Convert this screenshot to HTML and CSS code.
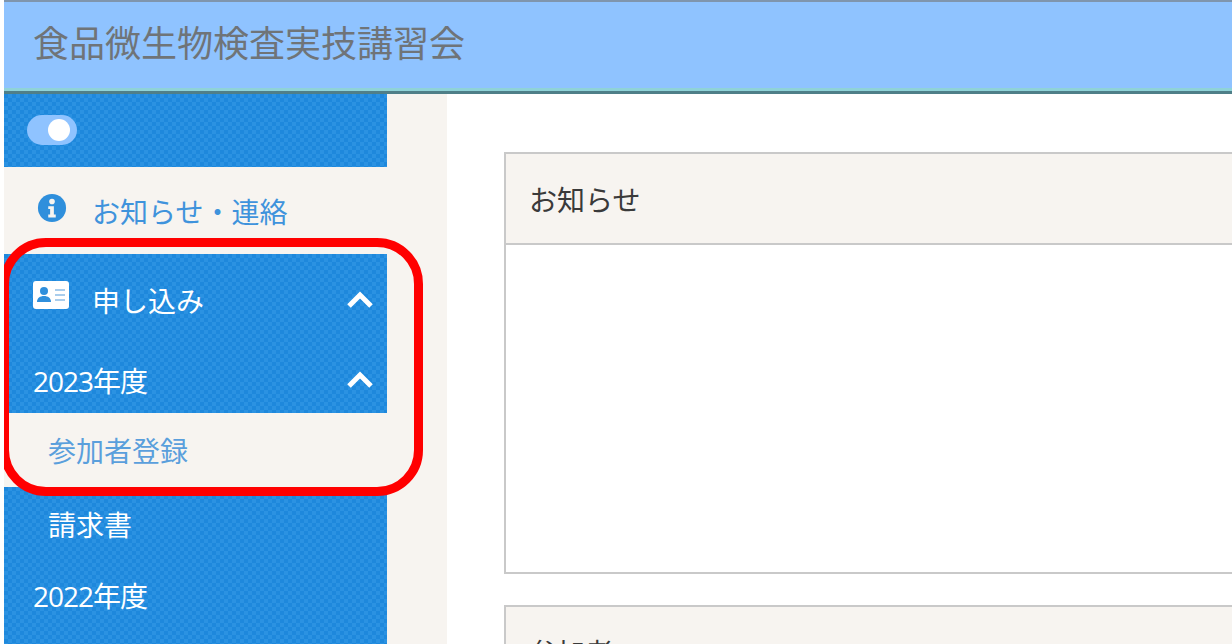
FILE: index.html
```html
<!DOCTYPE html>
<html lang="ja">
<head>
  <meta charset="UTF-8">
  <meta name="viewport" content="width=device-width, initial-scale=1.0">
  <title>食品微生物検査実技講習会</title>
  <link rel="stylesheet" href="styles.css">
</head>
<body>
  <div class="page">
    <header class="topbar">
      <h1>食品微生物検査実技講習会</h1>
    </header>
    <div class="layout">
      <div class="sidebar-wrap">
        <nav class="sidebar">
          <div class="toggle-row">
            <span class="toggle"><span class="knob"></span></span>
          </div>
          <a class="item item-notice">
            <svg class="icon-info" viewBox="0 0 32 32">
              <circle cx="16" cy="16" r="15" fill="#2f8fdc"/>
              <circle cx="16" cy="9" r="3" fill="#f7f4f0"/>
              <path d="M12 14h6v9h2v3h-8v-3h2v-6h-2z" fill="#f7f4f0"/>
            </svg>
            <span>お知らせ・連絡</span>
          </a>
          <div class="group">
            <a class="item item-apply">
              <svg class="icon-card" viewBox="0 0 36 28">
                <rect x="0" y="0" width="36" height="28" rx="3" fill="#fff"/>
                <circle cx="11" cy="10" r="4" fill="#2f8fdc"/>
                <path d="M4 21c0-4 3-6 7-6s7 2 7 6z" fill="#2f8fdc"/>
                <path d="M22 9h10M22 14h10M22 19h10" stroke="#a9cdec" stroke-width="2"/>
              </svg>
              <span class="grow">申し込み</span>
              <svg class="chevron" viewBox="0 0 28 18"><path d="M3 15L14 4l11 11" fill="none" stroke="#fff" stroke-width="5"/></svg>
            </a>
            <a class="item item-year">
              <span class="grow">2023年度</span>
              <svg class="chevron" viewBox="0 0 28 18"><path d="M3 15L14 4l11 11" fill="none" stroke="#fff" stroke-width="5"/></svg>
            </a>
          </div>
          <a class="item item-sub current">参加者登録</a>
          <div class="group group-rest">
            <a class="item item-sub">請求書</a>
            <a class="item item-year">
              <span class="grow">2022年度</span>
            </a>
          </div>
        </nav>
        <div class="highlight"></div>
      </div>
      <main class="content">
        <section class="panel">
          <h2 class="panel-head">お知らせ</h2>
          <div class="panel-body"></div>
        </section>
        <section class="panel">
          <h2 class="panel-head">参加者</h2>
        </section>
      </main>
    </div>
  </div>
</body>
</html>
```

FILE: styles.css
```css
html, body {
  margin: 0;
  padding: 0;
  height: 644px;
  overflow: hidden;
  background-color: #fff;
  font-family: "Open Sans", "Noto Sans CJK JP", sans-serif;
}
a {
  display: flex;
  align-items: center;
}
.page {
  margin-left: 4px;
  height: 644px;
  overflow: hidden;
}
.topbar {
  height: 86px;
  padding-left: 29px;
  display: flex;
  align-items: center;
  background-color: #8fc3ff;
  border-top: 2px solid #7f95ad;
  border-bottom: 3px solid #8fd3d8;
  box-shadow: 0 3px 0 #4f7f88;
  box-sizing: content-box;
}
.topbar h1 {
  margin: 0 0 3px;
  font-size: 36px;
  font-weight: 400;
  color: #6f7478;
  line-height: 1;
}
.layout {
  display: flex;
  margin-top: 3px;
}
.sidebar-wrap {
  position: relative;
  width: 443px;
  height: 550px;
  background-color: #f7f4f0;
  flex-shrink: 0;
}
.sidebar {
  width: 383px;
}
.toggle-row,
.group {
  background-color: #1e88dc;
  background-image: conic-gradient(#2b92e2 25%, transparent 0 50%, #2b92e2 0 75%, transparent 0);
  background-size: 8px 8px;
}
.toggle-row {
  height: 73px;
  display: flex;
  align-items: center;
  padding-left: 23px;
}
.toggle {
  width: 50px;
  height: 30px;
  border-radius: 15px;
  background-color: #8fc3ff;
  position: relative;
  margin-top: -1px;
}
.knob {
  position: absolute;
  left: 21px;
  top: 4px;
  width: 22px;
  height: 22px;
  border-radius: 50%;
  background-color: #fff;
}
.item {
  font-size: 28px;
  color: #fff;
  padding-left: 29px;
  padding-right: 13px;
}
.grow {
  flex: 1;
}
.item-notice {
  height: 87px;
  color: #3f93dc;
  padding-left: 33px;
}
.icon-info {
  width: 30px;
  height: 30px;
  margin-right: 25px;
  margin-top: -6px;
}
.item-apply {
  height: 92px;
  padding-top: 0;
}
.icon-card {
  width: 36px;
  height: 28px;
  margin-right: 23px;
  margin-top: -10px;
}
.item-year {
  height: 67px;
  letter-spacing: -1px;
}
.chevron {
  width: 28px;
  height: 18px;
}
.item-sub {
  height: 74px;
  padding-left: 44px;
}
.current {
  color: #5a9fdc;
}
.group-rest {
  height: 157px;
}
.highlight {
  position: absolute;
  left: -4px;
  top: 144px;
  width: 405px;
  height: 240px;
  border: 9px solid #ff0000;
  border-radius: 46px;
  pointer-events: none;
}
.content {
  flex: 1;
  padding: 58px 0 0 57px;
  background-color: #fff;
  min-width: 0;
}
.panel {
  width: 800px;
  border: 2px solid #c9c9c9;
  border-right: none;
  margin-bottom: 31px;
}
.panel-head {
  margin: 0;
  height: 89px;
  display: flex;
  align-items: center;
  padding-left: 23px;
  font-size: 28px;
  font-weight: 400;
  color: #3a3a3a;
  background-color: #f7f4f0;
  border-bottom: 2px solid #c9c9c9;
}
.panel-body {
  height: 327px;
  background-color: #fff;
}
```
